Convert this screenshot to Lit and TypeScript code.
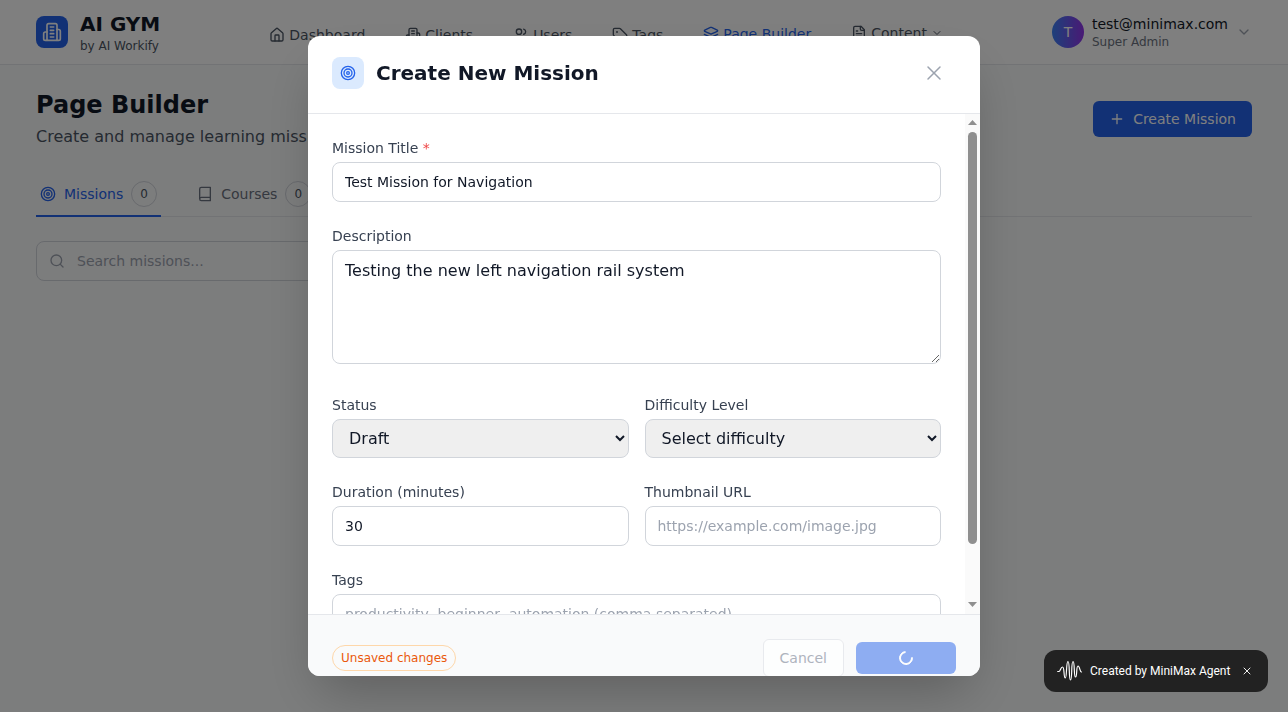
import { LitElement, html, css, svg } from 'lit';
import { customElement } from 'lit/decorators.js';

const ICONS = {
  home: svg`<path d="M15 21v-8a1 1 0 0 0-1-1h-4a1 1 0 0 0-1 1v8"/><path d="M3 10a2 2 0 0 1 .709-1.528l7-5.999a2 2 0 0 1 2.582 0l7 5.999A2 2 0 0 1 21 10v9a2 2 0 0 1-2 2H5a2 2 0 0 1-2-2z"/>`,
  building: svg`<path d="M6 22V4a2 2 0 0 1 2-2h8a2 2 0 0 1 2 2v18Z"/><path d="M6 12H4a2 2 0 0 0-2 2v6a2 2 0 0 0 2 2h2"/><path d="M18 9h2a2 2 0 0 1 2 2v9a2 2 0 0 1-2 2h-2"/><path d="M10 6h4"/><path d="M10 10h4"/><path d="M10 14h4"/><path d="M10 18h4"/>`,
  users: svg`<path d="M16 21v-2a4 4 0 0 0-4-4H6a4 4 0 0 0-4 4v2"/><circle cx="9" cy="7" r="4"/><path d="M22 21v-2a4 4 0 0 0-3-3.87"/><path d="M16 3.13a4 4 0 0 1 0 7.75"/>`,
  tag: svg`<path d="M12.586 2.586A2 2 0 0 0 11.172 2H4a2 2 0 0 0-2 2v7.172a2 2 0 0 0 .586 1.414l8.704 8.704a2.426 2.426 0 0 0 3.42 0l6.58-6.58a2.426 2.426 0 0 0 0-3.42z"/><circle cx="7.5" cy="7.5" r=".5" fill="currentColor"/>`,
  layers: svg`<path d="m12.83 2.18a2 2 0 0 0-1.66 0L2.6 6.08a1 1 0 0 0 0 1.83l8.58 3.91a2 2 0 0 0 1.66 0l8.58-3.9a1 1 0 0 0 0-1.83Z"/><path d="m22 17.65-9.17 4.16a2 2 0 0 1-1.66 0L2 17.65"/><path d="m22 12.65-9.17 4.16a2 2 0 0 1-1.66 0L2 12.65"/>`,
  file: svg`<path d="M15 2H6a2 2 0 0 0-2 2v16a2 2 0 0 0 2 2h12a2 2 0 0 0 2-2V7Z"/><path d="M14 2v4a2 2 0 0 0 2 2h4"/><path d="M10 9H8"/><path d="M16 13H8"/><path d="M16 17H8"/>`,
  target: svg`<circle cx="12" cy="12" r="10"/><circle cx="12" cy="12" r="6"/><circle cx="12" cy="12" r="2"/>`,
  book: svg`<path d="M4 19.5v-15A2.5 2.5 0 0 1 6.5 2H20v20H6.5a2.5 2.5 0 0 1 0-5H20"/>`,
  search: svg`<circle cx="11" cy="11" r="8"/><path d="m21 21-4.3-4.3"/>`,
  plus: svg`<path d="M5 12h14"/><path d="M12 5v14"/>`,
  chevron: svg`<path d="m6 9 6 6 6-6"/>`,
  x: svg`<path d="M18 6 6 18"/><path d="m6 6 12 12"/>`,
};

type IconName = keyof typeof ICONS;

const icon = (name: IconName, size = 16, stroke = 2) => html`
  <svg class="icon" width=${size} height=${size} viewBox="0 0 24 24" fill="none" stroke="currentColor"
    stroke-width=${stroke} stroke-linecap="round" stroke-linejoin="round">${ICONS[name]}</svg>
`;

// the reference's nav items don't sit on one line, drop is px below the top row
const NAV: { label: string; icon: IconName; drop: number; active?: boolean; menu?: boolean }[] = [
  { label: 'Dashboard', icon: 'home', drop: 2 },
  { label: 'Clients', icon: 'building', drop: 2 },
  { label: 'Users', icon: 'users', drop: 2 },
  { label: 'Tags', icon: 'tag', drop: 2 },
  { label: 'Page Builder', icon: 'layers', drop: 1, active: true },
  { label: 'Content', icon: 'file', drop: 0, menu: true },
];

@customElement('app-root')
export class AppRoot extends LitElement {
  static styles = css`
    :host {
      display: block;
      height: 712px;
      overflow: hidden;
      background: #f9fafb;
      color: #111827;
      font-family: "DejaVu Sans", sans-serif;
    }
    .icon { display: block; flex: none; }

    .topbar {
      display: flex;
      justify-content: space-between;
      align-items: center;
      height: 64px;
      padding: 0 36px;
      background: #fff;
      border-bottom: 1px solid #e5e7eb;
    }
    .brand { display: flex; align-items: center; gap: 12px; }
    .logo {
      display: flex;
      align-items: center;
      justify-content: center;
      width: 32px;
      height: 32px;
      border-radius: 8px;
      background: #2563eb;
      color: #fff;
    }
    .brand-name { font-size: 20px; font-weight: 700; line-height: 28px; }
    .brand-sub { font-size: 12px; line-height: 16px; color: #4b5563; }
    .nav {
      display: flex;
      align-items: flex-start;
      align-self: flex-start;
      gap: 40px;
      padding-top: 23px;
    }
    .nav-item {
      display: flex;
      align-items: center;
      gap: 4px;
      font-size: 14px;
      line-height: 20px;
      color: #4b5563;
    }
    .nav-item.active { color: #2563eb; }
    .drop-1 { margin-top: 1px; }
    .drop-2 { margin-top: 2px; }
    .user { display: flex; align-items: center; gap: 8px; }
    .avatar {
      display: flex;
      align-items: center;
      justify-content: center;
      width: 32px;
      height: 32px;
      border-radius: 50%;
      background: linear-gradient(90deg, #3b82f6, #9333ea);
      color: #fff;
      font-size: 14px;
    }
    .user-mail { font-size: 14px; line-height: 20px; }
    .user-role { font-size: 12px; line-height: 16px; color: #6b7280; }
    .user-chevron { color: #9ca3af; }

    main { padding: 24px 36px; }
    .page-head { display: flex; justify-content: space-between; align-items: center; }
    h1 { margin: 0; font-size: 24px; line-height: 32px; font-weight: 700; }
    .subtitle { margin: 4px 0 0; font-size: 16px; line-height: 24px; color: #4b5563; }
    .primary {
      display: flex;
      align-items: center;
      gap: 8px;
      height: 36px;
      padding: 0 16px;
      border: 0;
      border-radius: 6px;
      background: #2563eb;
      color: #fff;
      font: inherit;
      font-size: 14px;
    }
    .tabs {
      display: flex;
      gap: 32px;
      margin-top: 24px;
      border-bottom: 1px solid #e5e7eb;
    }
    .tab {
      display: flex;
      align-items: center;
      gap: 8px;
      height: 42px;
      padding: 0 4px;
      margin-bottom: -1px;
      border-bottom: 2px solid transparent;
      font-size: 14px;
      color: #6b7280;
    }
    .tab.active { color: #2563eb; border-bottom-color: #2563eb; }
    .count {
      display: flex;
      align-items: center;
      justify-content: center;
      width: 24px;
      height: 24px;
      border: 1px solid #d1d5db;
      border-radius: 50%;
      font-size: 12px;
      color: #4b5563;
    }
    .search {
      display: flex;
      align-items: center;
      gap: 12px;
      box-sizing: border-box;
      width: 448px;
      height: 40px;
      margin-top: 24px;
      padding: 0 12px;
      border: 1px solid #d1d5db;
      border-radius: 8px;
      background: #f9fafb;
      font-size: 14px;
      color: #9ca3af;
    }

    .overlay {
      position: fixed;
      inset: 0;
      display: flex;
      align-items: center;
      justify-content: center;
      background: rgba(0, 0, 0, 0.5);
    }
    .modal {
      display: flex;
      flex-direction: column;
      width: 672px;
      height: 640px;
      overflow: hidden;
      border-radius: 12px;
      background: #fff;
      box-shadow: 0 25px 50px -12px rgba(0, 0, 0, 0.25);
    }
    .modal-head {
      display: flex;
      align-items: center;
      gap: 12px;
      flex: none;
      height: 78px;
      box-sizing: border-box;
      padding: 0 34px 3px 24px;
      border-bottom: 1px solid #e5e7eb;
    }
    .modal-icon {
      display: flex;
      align-items: center;
      justify-content: center;
      width: 32px;
      height: 32px;
      border-radius: 8px;
      background: #dbeafe;
      color: #2563eb;
    }
    h2 { flex: 1; margin: 0; font-size: 20px; line-height: 28px; font-weight: 700; color: #111827; }
    .close { color: #9ca3af; }
    .modal-body {
      display: flex;
      flex: none;
      height: 500px;
    }
    .form {
      flex: 1;
      min-width: 0;
      box-sizing: border-box;
      padding: 24px;
      overflow: hidden;
    }
    /* headless chrome hides real scrollbars, so this one is drawn */
    .scrollbar {
      display: flex;
      flex-direction: column;
      align-items: center;
      flex: none;
      width: 15px;
      padding-top: 6px;
      box-sizing: border-box;
      background: #fafafa;
    }
    .arrow { display: block; fill: #8f8f8f; }
    .thumb {
      width: 9px;
      height: 412px;
      margin: 7px 0 58px;
      border-radius: 5px;
      background: #8f8f8f;
    }
    .field { margin-bottom: 24px; }
    .field.desc { margin-bottom: 31px; }
    .grid { display: grid; grid-template-columns: 1fr 1fr; column-gap: 16px; }
    label {
      display: block;
      margin-bottom: 4px;
      font-size: 14px;
      line-height: 20px;
      color: #374151;
    }
    .req { color: #ef4444; }
    input, textarea {
      display: block;
      box-sizing: border-box;
      width: 100%;
      border: 1px solid #d1d5db;
      border-radius: 8px;
      background: #fff;
      color: #111827;
      font-family: inherit;
    }
    input { height: 40px; padding: 0 12px; font-size: 14px; }
    input::placeholder { color: #9ca3af; }
    textarea { height: 114px; padding: 8px 12px; font-size: 16px; line-height: 24px; }
    select {
      box-sizing: border-box;
      width: 100%;
      height: 39px;
      padding: 0 12px;
      border: 1px solid #d1d5db;
      border-radius: 8px;
      background-color: #efefef;
      color: #111827;
      font-family: inherit;
      font-size: 16px;
    }
    .modal-foot {
      display: flex;
      align-items: center;
      justify-content: space-between;
      flex: none;
      padding: 24px;
      border-top: 1px solid #e5e7eb;
      background: #f9fafb;
    }
    .unsaved {
      padding: 4px 8px;
      border: 1px solid #fed7aa;
      border-radius: 999px;
      font-size: 12px;
      line-height: 16px;
      color: #ea580c;
    }
    .actions { display: flex; align-items: center; gap: 12px; }
    .cancel {
      box-sizing: border-box;
      height: 38px;
      padding: 0 16px;
      border: 1px solid #e5e7eb;
      border-radius: 6px;
      background: #fff;
      color: #9ca3af;
      font: inherit;
      font-size: 14px;
      opacity: 0.8;
    }
    .save {
      display: flex;
      align-items: center;
      justify-content: center;
      width: 100px;
      height: 32px;
      border-radius: 6px;
      background: #2563eb;
      opacity: 0.5;
    }
    .spinner {
      box-sizing: border-box;
      width: 14px;
      height: 14px;
      border: 2px solid #fff;
      border-top-color: transparent;
      border-radius: 50%;
      transform: rotate(40deg);
    }

    .toast {
      position: fixed;
      right: 20px;
      bottom: 20px;
      display: flex;
      align-items: center;
      gap: 7px;
      box-sizing: border-box;
      width: 224px;
      height: 42px;
      padding: 0 15px 0 13px;
      border-radius: 12px;
      background: #222;
      color: #fff;
      font-family: Roboto, sans-serif;
      font-size: 12px;
    }
    .toast-text { flex: 1; white-space: nowrap; }
    .toast-close { color: #eee; }
  `;

  render() {
    return html`
      <header class="topbar">
        <div class="brand">
          <div class="logo">${icon('building', 20)}</div>
          <div>
            <div class="brand-name">AI GYM</div>
            <div class="brand-sub">by AI Workify</div>
          </div>
        </div>
        <nav class="nav">
          ${NAV.map(item => html`
            <div class="nav-item drop-${item.drop} ${item.active ? 'active' : ''}">
              ${icon(item.icon)}
              <span>${item.label}</span>
              ${item.menu ? icon('chevron', 12) : ''}
            </div>
          `)}
        </nav>
        <div class="user">
          <div class="avatar">T</div>
          <div>
            <div class="user-mail">test@minimax.com</div>
            <div class="user-role">Super Admin</div>
          </div>
          <div class="user-chevron">${icon('chevron')}</div>
        </div>
      </header>

      <main>
        <div class="page-head">
          <div>
            <h1>Page Builder</h1>
            <p class="subtitle">Create and manage learning missions and courses</p>
          </div>
          <button class="primary">${icon('plus')}Create Mission</button>
        </div>
        <div class="tabs">
          <div class="tab active">${icon('target')}Missions<span class="count">0</span></div>
          <div class="tab">${icon('book')}Courses<span class="count">0</span></div>
        </div>
        <div class="search">${icon('search')}Search missions...</div>
      </main>

      <div class="overlay">
        <div class="modal">
          <div class="modal-head">
            <div class="modal-icon">${icon('target')}</div>
            <h2>Create New Mission</h2>
            <div class="close">${icon('x', 24, 1.5)}</div>
          </div>
          <div class="modal-body">
            <div class="form">
              <div class="field">
                <label>Mission Title <span class="req">*</span></label>
                <input value="Test Mission for Navigation" />
              </div>
              <div class="field desc">
                <label>Description</label>
                <textarea>Testing the new left navigation rail system</textarea>
              </div>
              <div class="field grid">
                <div>
                  <label>Status</label>
                  <select><option>Draft</option><option>Published</option></select>
                </div>
                <div>
                  <label>Difficulty Level</label>
                  <select><option>Select difficulty</option><option>Beginner</option></select>
                </div>
              </div>
              <div class="field grid">
                <div>
                  <label>Duration (minutes)</label>
                  <input value="30" />
                </div>
                <div>
                  <label>Thumbnail URL</label>
                  <input placeholder="https://example.com/image.jpg" />
                </div>
              </div>
              <div class="field">
                <label>Tags</label>
                <input placeholder="productivity, beginner, automation (comma separated)" />
              </div>
            </div>
            <div class="scrollbar">
              <svg class="arrow" width="9" height="5" viewBox="0 0 9 5"><path d="M4.5 0 9 5H0z"/></svg>
              <div class="thumb"></div>
              <svg class="arrow" width="9" height="5" viewBox="0 0 9 5"><path d="M0 0h9L4.5 5z"/></svg>
            </div>
          </div>
          <div class="modal-foot">
            <span class="unsaved">Unsaved changes</span>
            <div class="actions">
              <button class="cancel">Cancel</button>
              <div class="save"><div class="spinner"></div></div>
            </div>
          </div>
        </div>
      </div>

      <div class="toast">
        <svg class="icon" width="26" height="22" viewBox="0 0 26 22" fill="none" stroke="currentColor" stroke-width="1.2" stroke-linecap="round">
          <path d="M.7 11.5H2C3.5 11.5 3.5 7 5.6 7C7.6 7 6.5 18 8.3 18C10 18 9 1.5 11 1.5C13 1.5 11.6 20 13.5 20C15.4 20 14 1.5 16 1.5C18 1.5 16.6 17 18.5 17C20.4 17 19 6 21 6C23 6 22.6 12 24.5 12"/>
        </svg>
        <span class="toast-text">Created by MiniMax Agent</span>
        <span class="toast-close">${icon('x', 12)}</span>
      </div>
    `;
  }
}
